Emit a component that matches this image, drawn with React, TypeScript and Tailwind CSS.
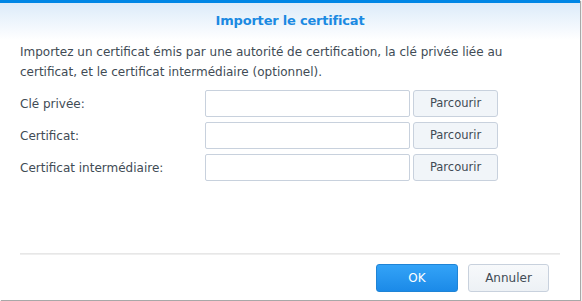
import { useState } from "react";

const rows = ["Clé privée:", "Certificat:", "Certificat intermédiaire:"];

export default function App() {
  const [files] = useState<string[]>(["", "", ""]);

  return (
    <div className="w-[582px] h-[301px] bg-white font-['DejaVu_Sans',sans-serif]">
      <div className="w-[580px] h-[300px] flex flex-col bg-white shadow-[1px_1px_1px_#a8a8a8]">
        <div className="h-[3px] bg-[#0086e5]" />
        <div className="h-[37px] flex items-center justify-center bg-gradient-to-b from-[#dcebf9] to-white">
          <h1 className="text-[13px] font-bold text-[#1b8ae2] mt-[-2px] tracking-[-0.2px]">Importer le certificat</h1>
        </div>

        <div className="flex-1 flex flex-col px-[20px] text-[12px] text-[#414b55]">
          <p className="leading-[20px] mt-[2px] max-w-[505px]">
            Importez un certificat émis par une autorité de certification, la clé privée liée au certificat, et le certificat intermédiaire (optionnel).
          </p>

          <div className="flex flex-col gap-[5px] mt-[8px]">
            {rows.map((label, i) => (
              <div key={label} className="flex items-center h-[27px]">
                <span className="w-[185px]">{label}</span>
                <input
                  type="text"
                  readOnly
                  value={files[i]}
                  className="w-[205px] h-[27px] border border-[#c8d1dd] rounded-[2px] bg-white outline-none"
                />
                <button className="ml-[3px] w-[85px] h-[27px] border border-[#c8d1dd] rounded-[3px] bg-[#f1f5f9] text-[#414b55] text-[11.5px]">
                  Parcourir
                </button>
              </div>
            ))}
          </div>

          <div className="mt-auto h-[2px] bg-gradient-to-b from-[#e3e3e3] to-[#f3f3f3]" />
          <div className="h-[45px] flex items-center justify-end gap-[10px] pr-[11px]">
            <button className="w-[82px] h-[28px] rounded-[3px] border border-[#1f84d6] bg-gradient-to-b from-[#33a3f7] to-[#1b8ae8] text-white text-[12px]">
              OK
            </button>
            <button className="w-[81px] h-[28px] rounded-[3px] border border-[#c8d1dd] bg-gradient-to-b from-[#f7f9fb] to-[#edf1f5] text-[#414b55] text-[12px]">
              Annuler
            </button>
          </div>
        </div>
      </div>
    </div>
  );
}
